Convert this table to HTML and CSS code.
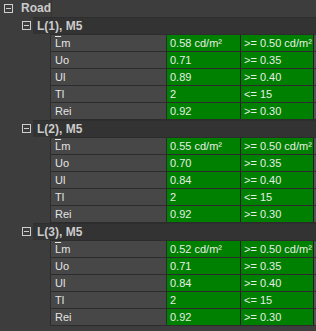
FILE: index.html
```html
<!DOCTYPE html>
<html>
<head>
<meta charset="utf-8">
<link rel="stylesheet" href="styles.css">
</head>
<body>
<div class="tree">
  <div class="row root"><span class="tog"></span><span class="label">Road</span></div>

  <div class="group">
    <div class="row head"><span class="tog"></span><span class="label">L(1), M5</span></div>
    <div class="data">
      <div class="drow"><div class="c name"><span class="ov">L</span>m</div><div class="c val">0.58 cd/m²</div><div class="c crit">&gt;= 0.50 cd/m²</div></div>
      <div class="drow"><div class="c name">Uo</div><div class="c val">0.71</div><div class="c crit">&gt;= 0.35</div></div>
      <div class="drow"><div class="c name">Ul</div><div class="c val">0.89</div><div class="c crit">&gt;= 0.40</div></div>
      <div class="drow"><div class="c name">Tl</div><div class="c val">2</div><div class="c crit">&lt;= 15</div></div>
      <div class="drow"><div class="c name">Rei</div><div class="c val">0.92</div><div class="c crit">&gt;= 0.30</div></div>
    </div>
  </div>

  <div class="group">
    <div class="row head"><span class="tog"></span><span class="label">L(2), M5</span></div>
    <div class="data">
      <div class="drow"><div class="c name"><span class="ov">L</span>m</div><div class="c val">0.55 cd/m²</div><div class="c crit">&gt;= 0.50 cd/m²</div></div>
      <div class="drow"><div class="c name">Uo</div><div class="c val">0.70</div><div class="c crit">&gt;= 0.35</div></div>
      <div class="drow"><div class="c name">Ul</div><div class="c val">0.84</div><div class="c crit">&gt;= 0.40</div></div>
      <div class="drow"><div class="c name">Tl</div><div class="c val">2</div><div class="c crit">&lt;= 15</div></div>
      <div class="drow"><div class="c name">Rei</div><div class="c val">0.92</div><div class="c crit">&gt;= 0.30</div></div>
    </div>
  </div>

  <div class="group">
    <div class="row head"><span class="tog"></span><span class="label">L(3), M5</span></div>
    <div class="data">
      <div class="drow"><div class="c name"><span class="ov">L</span>m</div><div class="c val">0.52 cd/m²</div><div class="c crit">&gt;= 0.50 cd/m²</div></div>
      <div class="drow"><div class="c name">Uo</div><div class="c val">0.71</div><div class="c crit">&gt;= 0.35</div></div>
      <div class="drow"><div class="c name">Ul</div><div class="c val">0.84</div><div class="c crit">&gt;= 0.40</div></div>
      <div class="drow"><div class="c name">Tl</div><div class="c val">2</div><div class="c crit">&lt;= 15</div></div>
      <div class="drow"><div class="c name">Rei</div><div class="c val">0.92</div><div class="c crit">&gt;= 0.30</div></div>
    </div>
  </div>
</div>
</body>
</html>
```

FILE: styles.css
```css
html, body {
  margin: 0;
  padding: 0;
  background: #3d3d3d;
}
body {
  font-family: "Liberation Sans", Arial, sans-serif;
  font-size: 11px;
  color: #e2e2e2;
}
.tree {
  width: 316px;
  height: 331px;
  overflow: hidden;
}
.row {
  display: flex;
  align-items: center;
  height: 17px;
}
.tog {
  position: relative;
  box-sizing: border-box;
  width: 9px;
  height: 9px;
  border: 1px solid #cfcfcf;
  flex: none;
}
.tog::after {
  content: "";
  position: absolute;
  left: 1px;
  right: 1px;
  top: 3px;
  height: 1px;
  background: #cfcfcf;
}
.label {
  font-weight: bold;
  font-size: 12px;
  color: #cbcbcb;
  white-space: nowrap;
}
.root .tog {
  margin-left: 4px;
}
.root .label {
  margin-left: 8px;
  padding-right: 0;
  height: 17px;
  line-height: 17px;
  flex: none;
}
.root::after {
  content: "";
  display: block;
  align-self: stretch;
  width: 1px;
  margin-left: 0;
  background: #333;
}
.head .tog {
  margin-left: 22px;
}
.head .label {
  margin-left: 2px;
  flex: 1;
  height: 17px;
  padding-left: 4px;
  background: #333333;
  border-top: 1px solid #2e2e2e;
  box-sizing: border-box;
  line-height: 16px;
}
.data {
  margin-left: 50px;
  border-top: 1px solid #2c2c2c;
  border-left: 1px solid #2c2c2c;
}
.drow {
  display: flex;
  height: 17px;
  box-sizing: border-box;
  border-bottom: 1px solid #2c2c2c;
}
.c {
  box-sizing: border-box;
  padding-left: 4px;
  line-height: 16px;
  white-space: nowrap;
  overflow: hidden;
}
.ov {
  text-decoration: overline;
}
.name {
  width: 116px;
  background: #474747;
  border-right: 1px solid #2c2c2c;
  color: #e4e4e4;
}
.val, .crit {
  background: #008000;
  color: #e6efe6;
  border-right: 1px solid #1e1e1e;
}
.val {
  width: 74px;
  padding-left: 3px;
}
.crit {
  width: 73px;
  padding-left: 3px;
}
.drow::after {
  content: "";
  flex: 1;
  background: #555;
}
```
